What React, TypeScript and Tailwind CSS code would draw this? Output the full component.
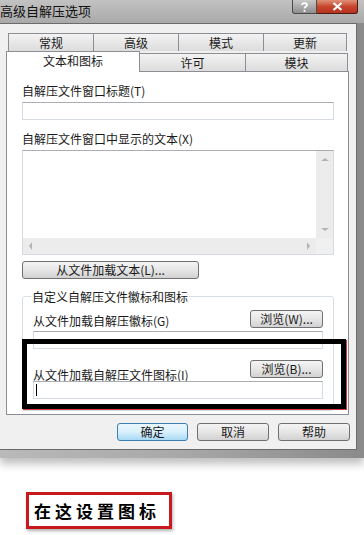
const font = { fontFamily: "'Noto Sans CJK SC', 'Noto Sans', sans-serif" }

function WinButton({ label, focused, className = '' }: { label: string; focused?: boolean; className?: string }) {
  return (
    <div
      className={`flex h-[18px] items-center justify-center rounded-[3px] border text-[12px] leading-none text-[#1a1a1a] ${
        focused
          ? 'border-[#3c7fb1] bg-gradient-to-b from-[#eaf6fd] via-[#d9f0fc] to-[#a7d9f5]'
          : 'border-[#707070] bg-gradient-to-b from-[#f4f4f4] via-[#e6e6e6] to-[#d2d2d2]'
      } ${className}`}
    >
      {label}
    </div>
  )
}

function TextBox({ cursor }: { cursor?: boolean }) {
  return (
    <div className="flex h-[18px] items-center border border-[#d5dbe1] border-t-[#abadb3] bg-white pl-[2px]">
      {cursor && <div className="h-[12px] w-px bg-black" />}
    </div>
  )
}

function Tab({ label, w }: { label: string; w: string }) {
  return (
    <div
      className={`flex h-[18px] items-center justify-center border border-b-0 border-[#8c8e94] bg-gradient-to-b from-[#f3f3f3] to-[#dcdcdc] text-[12px] leading-none text-[#1a1a1a] ${w}`}
    >
      {label}
    </div>
  )
}

export default function App() {
  return (
    <div className="flex h-[535px] w-[364px] flex-col overflow-hidden bg-white" style={font}>
      {/* window */}
      <div className="flex flex-col bg-gradient-to-r from-[#b9b9b9] via-[#a8a8a8] to-[#8a8a8a] shadow-[0_6px_8px_rgba(0,0,0,0.25)]">
        {/* title bar */}
        <div className="flex h-[23px] items-start justify-between pr-[6px] bg-gradient-to-b from-[#c2c2c2] to-[#a9a9a9]">
          <div className="pt-[3px] text-[13px] leading-[15px] text-[#111]">高级自解压选项</div>
          <div className="flex h-[14px]">
            <div className="flex w-[25px] items-center justify-center rounded-bl-[3px] border border-t-0 border-[#4b4b4b] bg-gradient-to-b from-[#c9c9c9] to-[#8f8f8f]">
              <svg width="7" height="10" viewBox="0 0 7 10">
                <path d="M1 3 C1 0.5 6 0.5 6 3 C6 4.5 3.5 4.5 3.5 6.5" fill="none" stroke="#fff" strokeWidth="1.8" />
                <rect x="2.6" y="8" width="1.8" height="1.8" fill="#fff" />
              </svg>
            </div>
            <div className="flex w-[41px] items-center justify-center rounded-br-[3px] border border-l-0 border-t-0 border-[#4b1a12] bg-gradient-to-b from-[#e08f78] via-[#c7452d] to-[#b6341e]">
              <svg width="11" height="9" viewBox="0 0 11 9">
                <path d="M1.5 1 L9.5 8 M9.5 1 L1.5 8" stroke="#fff" strokeWidth="2.2" />
              </svg>
            </div>
          </div>
        </div>

        {/* body */}
        <div className="mr-[7px] mb-[8px] flex flex-col border-t border-r border-b border-[#6b6b6b] bg-[#f0f0f0]">
          {/* tabs */}
          <div className="ml-[6px] mr-[7px] mt-[9px] flex flex-col">
            <div className="ml-[2px] flex">
              <Tab label="常规" w="w-[86px]" />
              <Tab label="高级" w="w-[86px] -ml-px" />
              <Tab label="模式" w="w-[86px] -ml-px" />
              <Tab label="更新" w="w-[84px] -ml-px" />
            </div>
            <div className="flex items-end">
              <div className="relative z-10 -mb-px flex h-[21px] w-[134px] items-start justify-center border border-b-0 border-[#8c8e94] bg-white pt-[3px] text-[12px] leading-none text-[#1a1a1a]">
                文本和图标
              </div>
              <Tab label="许可" w="w-[107px] -ml-px" />
              <Tab label="模块" w="w-[103px] -ml-px" />
            </div>

            {/* tab panel */}
            <div className="relative flex h-[344px] flex-col border border-[#8c8e94] bg-white pl-[15px] pr-[14px] text-[12px] leading-none text-[#1a1a1a]">
              <div className="mt-[13px] mb-[5px] h-[12px]">自解压文件窗口标题(T)</div>
              <TextBox />
              <div className="mt-[13px] mb-[5px] h-[12px]">自解压文件窗口中显示的文本(X)</div>

              {/* textarea */}
              <div className="flex h-[105px] flex-col border border-[#d5dbe1] border-t-[#abadb3] bg-white">
                <div className="flex flex-1">
                  <div className="flex-1" />
                  <div className="flex w-[17px] flex-col items-center justify-between bg-[#ececec] py-[7px]">
                    <div className="h-0 w-0 border-x-[4px] border-b-[3px] border-x-transparent border-b-[#b4b4b4]" />
                    <div className="h-0 w-0 border-x-[4px] border-t-[3px] border-x-transparent border-t-[#b4b4b4]" />
                  </div>
                </div>
                <div className="flex h-[16px]">
                  <div className="flex flex-1 items-center justify-between bg-[#ececec] px-[6px]">
                    <div className="h-0 w-0 border-y-[4px] border-r-[3px] border-y-transparent border-r-[#b4b4b4]" />
                    <div className="h-0 w-0 border-y-[4px] border-l-[3px] border-y-transparent border-l-[#b4b4b4]" />
                  </div>
                  <div className="w-[17px] bg-[#f0f0f0]" />
                </div>
              </div>

              <WinButton label="从文件加载文本(L)..." className="mt-[6px] w-[177px]" />

              {/* group box */}
              <div className="relative mt-[17px] flex h-[115px] flex-col rounded-[3px] border border-[#d5dfe5] px-[10px]">
                <div className="absolute -top-[7px] left-[8px] bg-white px-[1px] leading-[13px]">
                  自定义自解压文件徽标和图标
                </div>
                <div className="mt-[13px] flex items-end justify-between">
                  <div className="mb-[1px]">从文件加载自解压徽标(G)</div>
                  <WinButton label="浏览(W)..." className="w-[73px]" />
                </div>
                <div className="mt-[3px]">
                  <TextBox />
                </div>
                <div className="mt-[11px] flex items-end justify-between">
                  <div className="-mb-[3px]">从文件加载自解压文件图标(I)</div>
                  <WinButton label="浏览(B)..." className="w-[73px]" />
                </div>
                <div className="mt-[3px]">
                  <TextBox cursor />
                </div>
              </div>

              {/* highlight annotation */}
              <div className="absolute left-[15px] top-[267px] h-[70px] w-[324px] border-[5px] border-black shadow-[1px_1px_0_#d23a3a]" />
            </div>
          </div>

          {/* dialog buttons */}
          <div className="mb-[8px] mt-[8px] flex justify-end gap-[9px] pr-[6px]">
            <WinButton label="确定" focused className="w-[71px]" />
            <WinButton label="取消" className="w-[72px]" />
            <WinButton label="帮助" className="w-[72px]" />
          </div>
        </div>
      </div>

      {/* caption */}
      <div className="ml-[26px] mt-[34px] flex h-[37px] w-[146px] items-center border-[3px] border-[#c8191f] pl-[5px] shadow-[1px_2px_3px_rgba(0,0,0,0.3)]">
        <span className="text-[17px] font-bold leading-none tracking-[4px] text-black">在这设置图标</span>
      </div>
    </div>
  )
}
